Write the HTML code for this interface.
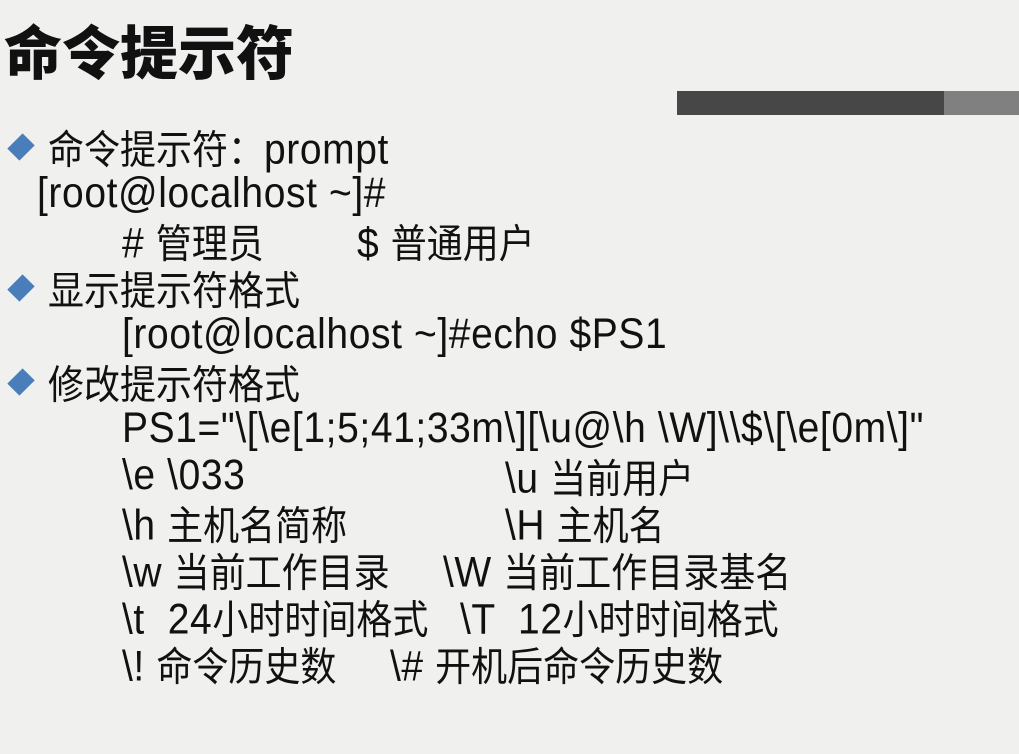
<!DOCTYPE html>
<html><head><meta charset="utf-8"><style>
body{margin:0;width:1019px;height:754px;background:#f0f0ee;position:relative;overflow:hidden;font-family:"Liberation Sans","Noto Sans CJK SC",sans-serif;color:#111}
.t{position:absolute;font-size:39px;white-space:nowrap;line-height:40px;letter-spacing:0.6px;transform:scaleY(1.1);transform-origin:0 50%}
.t b{font-weight:normal;font-size:36px;letter-spacing:0;font-family:"Noto Sans CJK SC",sans-serif}
.title{position:absolute;left:4px;top:18px;font-size:58px;font-weight:900;font-family:"Noto Sans CJK SC",sans-serif;color:#111;line-height:1.1}
.d{position:absolute;width:18px;height:18px;background:#4a7ebb;transform:rotate(45deg) scale(0.95,1.2)}
</style></head><body>
<div class="title">命令提示符</div>
<div style="position:absolute;left:677px;top:91px;width:267px;height:24px;background:#474747"></div>
<div style="position:absolute;left:944px;top:91px;width:75px;height:24px;background:#808080"></div>

<div class="d" style="left:12px;top:138px"></div>
<div class="t" style="left:48px;top:127px"><b>命令提示符：</b>prompt</div>
<div class="t" style="left:37px;top:174px">[root@localhost ~]#</div>
<div class="t" style="left:122px;top:221px"># <b>管理员</b></div>
<div class="t" style="left:357px;top:221px">$ <b>普通用户</b></div>
<div class="d" style="left:12px;top:279px"></div>
<div class="t" style="left:48px;top:268px"><b>显示提示符格式</b></div>
<div class="t" style="left:122px;top:315px">[root@localhost ~]#echo $PS1</div>
<div class="d" style="left:12px;top:373px"></div>
<div class="t" style="left:48px;top:362px"><b>修改提示符格式</b></div>
<div class="t" style="left:122px;top:409px">PS1="\[\e[1;5;41;33m\][\u@\h \W]\\$\[\e[0m\]"</div>
<div class="t" style="left:122px;top:456px">\e \033</div>
<div class="t" style="left:505px;top:456px">\u <b>当前用户</b></div>
<div class="t" style="left:122px;top:503px">\h <b>主机名简称</b></div>
<div class="t" style="left:505px;top:503px">\H <b>主机名</b></div>
<div class="t" style="left:122px;top:550px">\w <b>当前工作目录</b></div>
<div class="t" style="left:443px;top:550px">\W <b>当前工作目录基名</b></div>
<div class="t" style="left:122px;top:597px">\t &nbsp;24<b>小时时间格式</b></div>
<div class="t" style="left:460px;top:597px">\T &nbsp;12<b>小时时间格式</b></div>
<div class="t" style="left:122px;top:644px">\! <b>命令历史数</b></div>
<div class="t" style="left:390px;top:644px">\# <b>开机后命令历史数</b></div>
</body></html>
